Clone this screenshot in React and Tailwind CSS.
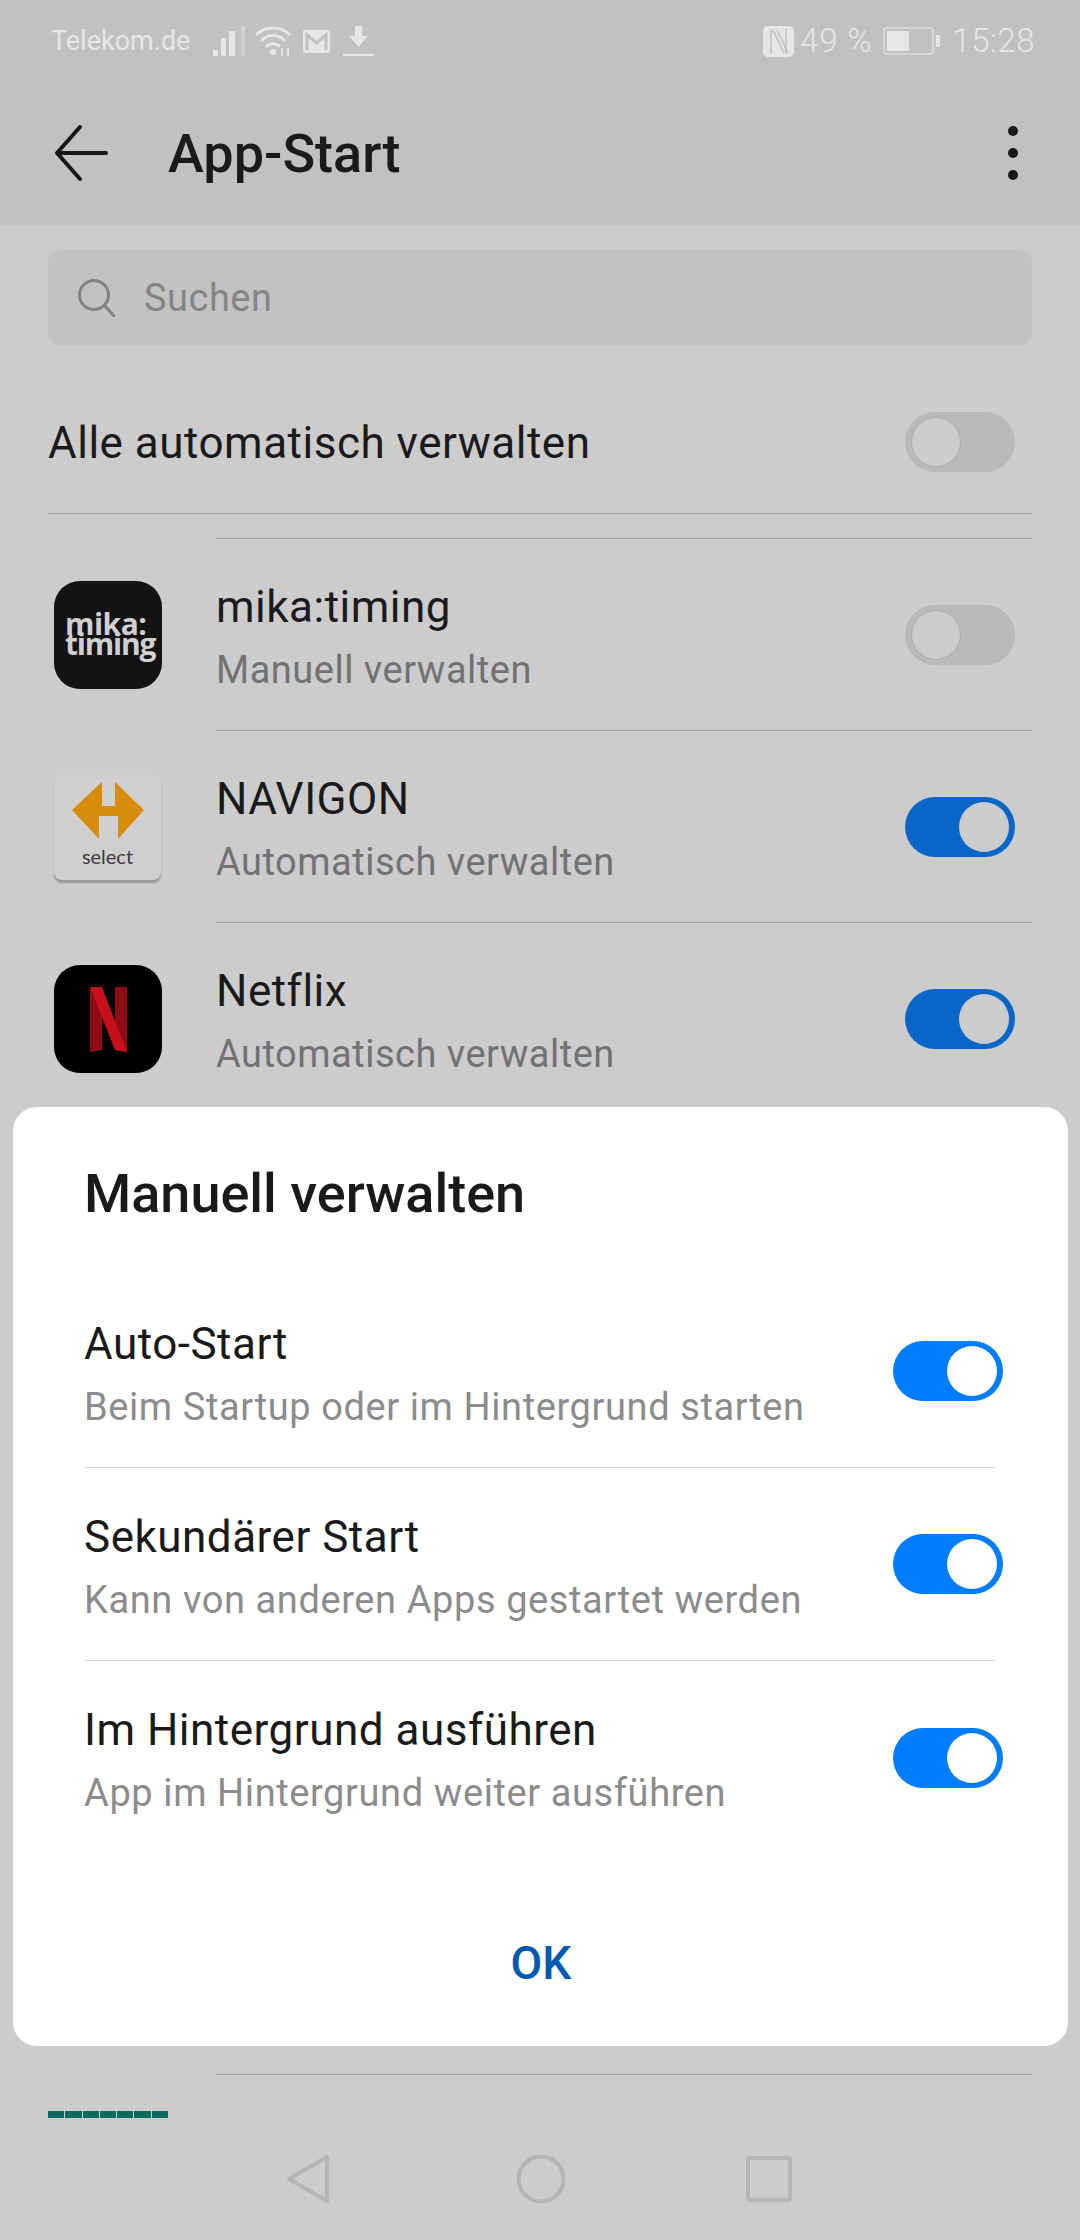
function Toggle({ on, dim }) {
  const track = on
    ? dim
      ? "bg-[#0866c9] justify-end"
      : "bg-[#007dff] justify-end"
    : "bg-[#b9b9b9] justify-start";
  const knob = on
    ? dim
      ? "bg-[#cccccc]"
      : "bg-white"
    : "bg-[#cccccc] border border-[#adadad]";
  return (
    <div className={`w-[110px] h-[60px] rounded-full flex items-center px-[6px] shrink-0 ${track}`}>
      <div className={`w-[50px] h-[50px] rounded-full ${knob}`} />
    </div>
  );
}

function MikaIcon() {
  return (
    <div className="w-[108px] h-[108px] rounded-[26px] bg-[#131313] flex flex-col items-start justify-center pl-[11px] pb-[2px] text-[#d0d0d0] font-['Open_Sans',sans-serif] font-bold leading-[20px]">
      <span className="text-[30px] tracking-[-0.5px]">mika:</span>
      <span className="text-[30px] tracking-[-1.2px]">timing</span>
    </div>
  );
}

function NavigonIcon() {
  return (
    <div className="w-[107px] h-[105px] rounded-[8px] bg-[#cfcfcf] shadow-[0_3px_2px_#999999] flex flex-col items-center pt-[7px]">
      <svg width="72" height="57" viewBox="0 0 72 57">
        <path d="M30 0V24H43V0L72 28L46 57V34H27V57L0 28Z" fill="#d88c0c" />
      </svg>
      <span className="text-[20px] leading-[24px] text-[#3c3c3c] font-['Lato',sans-serif] mt-[5px]">select</span>
    </div>
  );
}

function NetflixIcon() {
  return (
    <div className="w-[108px] h-[108px] rounded-[26px] bg-black flex items-center justify-center">
      <svg width="37" height="65" viewBox="0 0 37 65">
        <path d="M0 0H12V63L0 65Z" fill="#8f0d12" />
        <path d="M25 0H37V65L25 63Z" fill="#8f0d12" />
        <path d="M0 0H12L37 65L25 63Z" fill="#c8101c" />
      </svg>
    </div>
  );
}

function AppRow({ icon, name, sub, on }) {
  return (
    <div className="flex h-[192px]">
      <div className="w-[168px] shrink-0 flex items-center pl-[6px] pt-[2px]">{icon}</div>
      <div className="flex-1 border-t border-[#a3a3a3] flex items-center justify-between pr-[17px]">
        <div className="pt-[6px]">
          <div className="text-[44px] leading-[44px] tracking-[0.5px] text-[#1a1a1a]">{name}</div>
          <div className="text-[38px] leading-[40px] tracking-[0.5px] text-[#727272] mt-[21px]">{sub}</div>
        </div>
        <Toggle on={on} dim />
      </div>
    </div>
  );
}

function DialogRow({ title, sub, last }) {
  return (
    <div className={`h-[193px] flex items-center justify-between ${last ? "" : "border-b border-[#dcdcdc]"}`}>
      <div className="pt-[6px]">
        <div className="text-[44px] leading-[44px] tracking-[0.5px] text-[#1a1a1a]">{title}</div>
        <div className="text-[38px] leading-[40px] tracking-[0.6px] text-[#8c8c8c] mt-[21px]">{sub}</div>
      </div>
      <div className="-mr-[7px]">
        <Toggle on />
      </div>
    </div>
  );
}

export default function App() {
  return (
    <div className="relative w-[1080px] h-[2240px] overflow-hidden bg-[#cccccc] flex flex-col font-['Roboto',sans-serif]">
      {/* HEADER */}
      <div className="bg-[#c1c1c1] h-[225px] shrink-0">
        <div className="h-[80px] pt-[2px] pl-[51px] pr-[45px] flex items-center justify-between text-[#e6e6e6]">
          <div className="flex items-center">
            <span className="text-[27px] leading-[30px]">Telekom.de</span>
            <svg className="ml-[23px]" width="32" height="30" viewBox="0 0 32 30">
              <rect x="0" y="24" width="5" height="6" fill="#e6e6e6" />
              <rect x="8" y="12" width="5" height="18" fill="#e6e6e6" />
              <rect x="16" y="5" width="6" height="25" fill="#e6e6e6" />
              <rect x="28" y="0" width="4" height="30" fill="#d2d2d2" />
            </svg>
            <svg className="ml-[10px]" width="36" height="30" viewBox="0 0 36 30" fill="none" stroke="#e6e6e6" strokeWidth="3" strokeLinecap="round">
              <path d="M2 8C10 0 26 0 34 8" />
              <path d="M7 14C13 8 23 8 29 14" />
              <path d="M12 20C15 17 21 17 24 20" />
              <circle cx="18" cy="26" r="3" fill="#e6e6e6" stroke="none" />
              <path d="M27 23V30M33 23V30" strokeWidth="2" />
            </svg>
            <svg className="ml-[12px]" width="27" height="23" viewBox="0 0 27 23">
              <rect width="27" height="23" rx="2" fill="#e6e6e6" />
              <path d="M4 20V5L13.500 13L23 5V20" fill="none" stroke="#c1c1c1" strokeWidth="3" />
            </svg>
            <svg className="ml-[13px]" width="31" height="31" viewBox="0 0 31 31">
              <path d="M12 0H19V10H25L15.500 21L6 10H12Z" fill="#e6e6e6" />
              <rect x="0" y="28" width="31" height="2" fill="#e6e6e6" />
            </svg>
          </div>
          <div className="flex items-center">
            <svg width="31" height="31" viewBox="0 0 31 31">
              <rect width="31" height="31" rx="5" fill="#e6e6e6" />
              <path d="M8 3V28M23 3V28" fill="none" stroke="#c1c1c1" strokeWidth="1.5" />
              <path d="M10 4L21 27M14 4L25 27" fill="none" stroke="#c1c1c1" strokeWidth="1.500" />
            </svg>
            <span className="text-[33px] leading-[36px] font-light ml-[6px] tracking-[0.8px]">49 %</span>
            <svg className="ml-[11px]" width="57" height="28" viewBox="0 0 57 28">
              <rect x="1" y="1" width="49" height="26" rx="3" fill="none" stroke="#dcdcdc" strokeWidth="1.5" />
              <rect x="4" y="4" width="22" height="20" fill="#e6e6e6" />
              <rect x="53" y="8" width="4" height="12" rx="1" fill="#e6e6e6" />
            </svg>
            <span className="text-[33px] leading-[36px] font-light ml-[12px] tracking-[0.5px]">15:28</span>
          </div>
        </div>
        <div className="h-[145px] pl-[49px] pr-[62px] flex items-center justify-between text-[#1a1a1a]">
          <div className="flex items-center">
            <svg width="62" height="62" viewBox="0 0 62 62" fill="none" stroke="#171717" strokeWidth="4" strokeLinecap="round" strokeLinejoin="round">
              <path d="M57 31H9M31 5L8 31L31 57" />
            </svg>
            <span className="text-[54px] leading-[60px] font-medium ml-[57px] pt-[2px]">App-Start</span>
          </div>
          <div className="flex flex-col gap-[12px]">
            <div className="w-[10px] h-[10px] rounded-full bg-[#171717]" />
            <div className="w-[10px] h-[10px] rounded-full bg-[#171717]" />
            <div className="w-[10px] h-[10px] rounded-full bg-[#171717]" />
          </div>
        </div>
      </div>

      {/* LIST */}
      <div className="flex-1 px-[48px] overflow-hidden">
        <div className="mt-[25px] h-[95px] rounded-[12px] bg-[#c2c2c2] flex items-center pl-[30px]">
          <svg width="37" height="38" viewBox="0 0 37 38" fill="none" stroke="#838383" strokeWidth="3" strokeLinecap="round">
            <circle cx="16" cy="16" r="14.500" />
            <path d="M27 27L36 37" />
          </svg>
          <span className="ml-[29px] pt-[2px] text-[38px] text-[#858585] tracking-[0.5px]">Suchen</span>
        </div>
        <div className="h-[169px] pt-[28px] border-b border-[#a3a3a3] flex items-center justify-between pr-[17px]">
          <span className="text-[44px] tracking-[0.5px] text-[#1a1a1a]">Alle automatisch verwalten</span>
          <div className="-mt-[2px]">
            <Toggle on={false} dim />
          </div>
        </div>
        <div className="h-[24px]" />
        <AppRow icon={<MikaIcon />} name="mika:timing" sub="Manuell verwalten" on={false} />
        <AppRow icon={<NavigonIcon />} name="NAVIGON" sub="Automatisch verwalten" on />
        <AppRow icon={<NetflixIcon />} name="Netflix" sub="Automatisch verwalten" on />
        <div className="h-[960px]" />
        <div className="ml-[168px] border-t border-[#a3a3a3]" />
        <div className="mt-[36px] w-[120px] h-[7px] flex gap-[1px]">
          {[0, 1, 2, 3, 4, 5, 6].map((i) => (
            <div key={i} className="flex-1 bg-[#0c6b5c]" />
          ))}
        </div>
      </div>

      {/* NAV BAR */}
      <div className="h-[110px] shrink-0 flex items-start justify-center gap-[182px] pt-[24px] pr-[4px]">
        <svg width="46" height="50" viewBox="0 0 46 50" fill="none" stroke="#b5b5b5" strokeWidth="4" strokeLinejoin="round">
          <path d="M42 3V47L4 25Z" />
        </svg>
        <svg className="ml-[3px] mr-[-2px]" width="50" height="50" viewBox="0 0 50 50" fill="none" stroke="#b5b5b5" strokeWidth="4">
          <circle cx="25" cy="25" r="22.500" />
        </svg>
        <svg className="mt-[2px]" width="46" height="46" viewBox="0 0 46 46" fill="none" stroke="#b5b5b5" strokeWidth="4">
          <rect x="2" y="2" width="42" height="42" rx="2" />
        </svg>
      </div>

      {/* DIALOG */}
      <div className="absolute left-[13px] top-[1107px] w-[1055px] h-[939px] bg-white rounded-[24px] pl-[71px] pr-[72px]">
        <h2 className="mt-[62px] text-[54px] leading-[50px] font-medium text-[#1a1a1a]">Manuell verwalten</h2>
        <div className="mt-[56px]">
          <DialogRow title="Auto-Start" sub="Beim Startup oder im Hintergrund starten" />
          <DialogRow title="Sekundärer Start" sub="Kann von anderen Apps gestartet werden" />
          <DialogRow title="Im Hintergrund ausführen" sub="App im Hintergrund weiter ausführen" last />
        </div>
        <div className="mt-[85px] text-center text-[46px] leading-[48px] font-medium text-[#0059b3] pl-[2px]">OK</div>
      </div>
    </div>
  );
}
